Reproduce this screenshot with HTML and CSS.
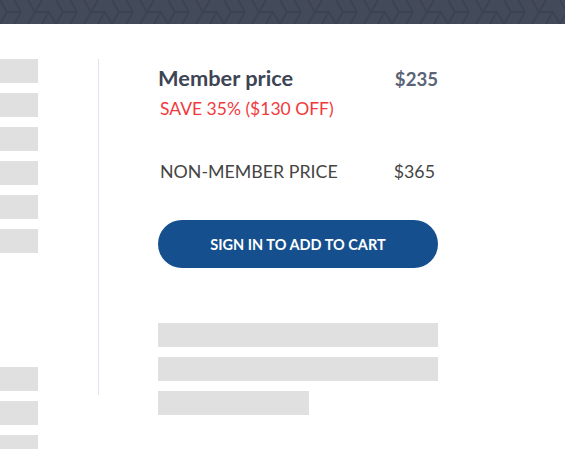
FILE: index.html
```html
<!DOCTYPE html>
<html>
<head>
<meta charset="utf-8">
<link rel="stylesheet" href="styles.css">
</head>
<body>
<header class="topbar">
  <svg class="pattern" width="565" height="24" xmlns="http://www.w3.org/2000/svg">
    <defs>
      <pattern id="hex" width="56" height="24" patternUnits="userSpaceOnUse">
        <path d="M0 0 L7 12 L0 24 M14 0 L21 12 L14 24 M28 0 L35 12 L42 0 M28 24 L35 12 M42 24 L49 12 L56 24 M7 12 L21 12 M35 12 L49 12" stroke="#394050" stroke-width="2" fill="none" opacity="0.8"/>
      </pattern>
    </defs>
    <rect width="565" height="24" fill="url(#hex)"/>
  </svg>
</header>
<main class="layout">
  <aside class="sidebar">
    <div class="group">
      <div class="bar"></div><div class="bar"></div><div class="bar"></div>
      <div class="bar"></div><div class="bar"></div><div class="bar"></div>
    </div>
    <div class="group lower">
      <div class="bar"></div><div class="bar"></div><div class="bar"></div>
    </div>
  </aside>
  <div class="divider"></div>
  <section class="content">
    <div class="row member">
      <h2 class="title">Member price</h2>
      <span class="price">$235</span>
    </div>
    <p class="save">SAVE 35% ($130 OFF)</p>
    <div class="row nonmember">
      <span class="label">NON-MEMBER PRICE</span>
      <span class="price2">$365</span>
    </div>
    <button class="cta">SIGN IN TO ADD TO CART</button>
    <div class="skeleton">
      <div class="sk full"></div>
      <div class="sk full"></div>
      <div class="sk short"></div>
    </div>
  </section>
</main>
</body>
</html>
```

FILE: styles.css
```css
* { box-sizing: border-box; }
html, body { margin: 0; padding: 0; background: #fff; }
body { font-family: Lato, "Open Sans", sans-serif; width: 565px; height: 449px; overflow: hidden; }

.topbar { height: 24px; background: #434a5a; overflow: hidden; }
.pattern { display: block; }

.layout { display: flex; align-items: flex-start; padding-top: 35px; }

.sidebar { width: 38px; flex: none; }
.group { display: flex; flex-direction: column; gap: 10px; }
.group.lower { margin-top: 114px; }
.bar { height: 24px; background: #e0e0e0; }

.divider { width: 1px; height: 336px; background: #e2e1ef; margin-left: 60px; flex: none; }

.content { width: 280px; margin-left: 59px; flex: none; }

.row { display: flex; justify-content: space-between; align-items: baseline; }
.member { margin-top: 6px; }
.title { margin: 0; font-size: 21.8px; font-weight: 700; color: #3d4454; line-height: 26px; }
.price { font-size: 18.6px; font-weight: 700; color: #5a6476; }
.save { margin: 8px 0 0 2px; font-size: 17.5px; color: #f2393c; line-height: 20px; }

.nonmember { margin-top: 42px; padding: 0 3px 0 2px; }
.label, .price2 { font-size: 17.8px; color: #454545; line-height: 20px; }

.cta { display: block; width: 280px; height: 48px; margin-top: 39px; border: none; border-radius: 24px; background: #154f8d; color: #fff; font-family: Lato, sans-serif; font-weight: 700; font-size: 14.5px; padding: 0; }

.skeleton { margin-top: 55px; display: flex; flex-direction: column; gap: 10px; }
.sk { height: 24px; background: #e0e0e0; }
.sk.short { width: 151px; }
```
